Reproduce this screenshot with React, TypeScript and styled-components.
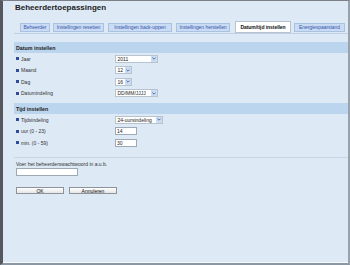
import React from 'react';
import styled, { createGlobalStyle } from 'styled-components';

const GlobalStyle = createGlobalStyle`
  html, body {
    margin: 0;
    padding: 0;
    background: #dee9f6;
  }
  body {
    font-family: "Liberation Sans", Arial, sans-serif;
  }
`;

const Frame = styled.div`
  box-sizing: border-box;
  width: 350px;
  height: 265px;
  display: flex;
  flex-direction: column;
  background: #dee9f6;
  border-left: 3px solid #55595f;
  border-top: 1px solid #7c8086;
  border-right: 2px solid #97a2ad;
  border-bottom: 2px solid #8b97a3;
  box-shadow: inset 0 -1px 0 #f6f9fd;
  overflow: hidden;
`;

const Title = styled.h1`
  margin: 0;
  padding: 2px 0 0 12px;
  font-size: 8px;
  line-height: 10px;
  font-weight: bold;
  color: #222;
`;

const TabBar = styled.div`
  display: flex;
  align-items: center;
  height: 12px;
  margin: 8px 0 0 11px;
  padding-left: 6px;
  border-bottom: 1px solid #bfd0e6;
`;

const Tab = styled.div<{ $active?: boolean; $w: number; $gap: number }>`
  box-sizing: border-box;
  flex: none;
  width: ${(p) => p.$w}px;
  margin-left: ${(p) => p.$gap}px;
  height: ${(p) => (p.$active ? 12 : 9)}px;
  display: flex;
  align-items: center;
  justify-content: center;
  font-size: 5px;
  letter-spacing: -0.05px;
  white-space: nowrap;
  overflow: hidden;
  font-weight: ${(p) => (p.$active ? 'bold' : 'normal')};
  color: ${(p) => (p.$active ? '#111' : '#3656ad')};
  background: ${(p) => (p.$active ? '#ffffff' : '#cadcf3')};
  border: 1px solid ${(p) => (p.$active ? '#b9c3cf' : '#aac2e2')};
`;

const Content = styled.div`
  display: flex;
  flex-direction: column;
  margin-left: 11px;
`;

const SectionHeader = styled.div<{ $gap: number }>`
  height: 11px;
  margin-top: ${(p) => p.$gap}px;
  padding-left: 2px;
  display: flex;
  align-items: center;
  background: #bcd5ee;
  font-size: 5.3px;
  font-weight: bold;
  color: #222;
`;

const Row = styled.div`
  display: grid;
  grid-template-columns: 99px 1fr;
  align-items: center;
  height: 11.5px;
  padding-left: 2px;
`;

const Label = styled.div`
  display: flex;
  align-items: center;
  gap: 2px;
  font-size: 5px;
  color: #333;
  white-space: nowrap;
`;

const Bullet = styled.span`
  width: 3px;
  height: 3px;
  background: #2c4c9c;
`;

const Control = styled.div`
  display: flex;
  align-items: center;
`;

const SelectFrame = styled.div<{ $w: number }>`
  box-sizing: border-box;
  width: ${(p) => p.$w}px;
  height: 8px;
  display: flex;
  align-items: stretch;
  background: #fff;
  border: 1px solid #b8c3d0;
`;

const SelectValue = styled.span`
  flex: 1;
  display: flex;
  align-items: center;
  padding-left: 1.5px;
  font-size: 5px;
  color: #222;
  white-space: nowrap;
  overflow: hidden;
`;

const SelectArrow = styled.span`
  width: 6px;
  display: flex;
  align-items: center;
  justify-content: center;
  background: #cbdcf2;
`;

const TextInput = styled.input<{ $w: number }>`
  display: block;
  box-sizing: border-box;
  width: ${(p) => p.$w}px;
  height: 8px;
  margin: 0;
  padding: 0 1px;
  border: 1px solid #9ea9b6;
  background: #fff;
  font-family: inherit;
  font-size: 5px;
  color: #222;
  outline: none;
`;

const Divider = styled.hr`
  margin: 8.5px 0 0 0;
  border: 0;
  border-top: 1px solid #c6d5e8;
`;

const Prompt = styled.div`
  margin-top: 3px;
  padding-left: 2px;
  font-size: 5px;
  line-height: 7px;
  color: #333;
`;

const PasswordWrap = styled.div`
  display: flex;
  padding-left: 2px;
`;

const ButtonRow = styled.div`
  display: flex;
  gap: 5px;
  margin-top: 11px;
  padding-left: 2px;
`;

const Button = styled.button`
  box-sizing: border-box;
  width: 48px;
  height: 7px;
  margin: 0;
  padding: 0;
  display: flex;
  align-items: center;
  justify-content: center;
  font-family: inherit;
  font-size: 5px;
  color: #111;
  background: linear-gradient(#ffffff, #e6e6e6);
  border: 1px solid #8d939a;
`;

const Select = ({ width, value }: { width: number; value: string }) => (
  <SelectFrame $w={width}>
    <SelectValue>{value}</SelectValue>
    <SelectArrow>
      <svg width="4" height="3" viewBox="0 0 4 3">
        <path d="M0.4 0.6 L2 2.2 L3.6 0.6" fill="none" stroke="#2f4f9f" strokeWidth="0.8" />
      </svg>
    </SelectArrow>
  </SelectFrame>
);

const Field = ({ label, children }: { label: string; children: React.ReactNode }) => (
  <Row>
    <Label>
      <Bullet />
      {label}
    </Label>
    <Control>{children}</Control>
  </Row>
);

const tabs = [
  { label: 'Beheerder', w: 30, gap: 0 },
  { label: 'Instellingen resetten', w: 51, gap: 3 },
  { label: 'Instellingen back-uppen', w: 64, gap: 4 },
  { label: 'Instellingen herstellen', w: 54, gap: 4 },
  { label: 'Datum/tijd instellen', w: 56, gap: 5, active: true },
  { label: 'Energiespaarstand', w: 51, gap: 3 },
];

const App = () => (
  <>
    <GlobalStyle />
    <Frame>
      <Title>Beheerdertoepassingen</Title>
      <TabBar>
        {tabs.map((t) => (
          <Tab key={t.label} $w={t.w} $gap={t.gap} $active={t.active}>
            {t.label}
          </Tab>
        ))}
      </TabBar>
      <Content>
        <SectionHeader $gap={8}>Datum instellen</SectionHeader>
        <Field label="Jaar">
          <Select width={43} value="2011" />
        </Field>
        <Field label="Maand">
          <Select width={17} value="12" />
        </Field>
        <Field label="Dag">
          <Select width={17} value="16" />
        </Field>
        <Field label="Datumindeling">
          <Select width={43} value="DD/MM/JJJJ" />
        </Field>

        <SectionHeader $gap={4}>Tijd instellen</SectionHeader>
        <Field label="Tijdsindeling">
          <Select width={48} value="24-uursindeling" />
        </Field>
        <Field label="uur (0 - 23)">
          <TextInput $w={22} value="14" readOnly />
        </Field>
        <Field label="min. (0 - 59)">
          <TextInput $w={22} value="30" readOnly />
        </Field>

        <Divider />
        <Prompt>Voer het beheerderswachtwoord in a.u.b.</Prompt>
        <PasswordWrap>
          <TextInput $w={62} type="password" value="" readOnly />
        </PasswordWrap>
        <ButtonRow>
          <Button>OK</Button>
          <Button>Annuleren</Button>
        </ButtonRow>
      </Content>
    </Frame>
  </>
);

export default App;
